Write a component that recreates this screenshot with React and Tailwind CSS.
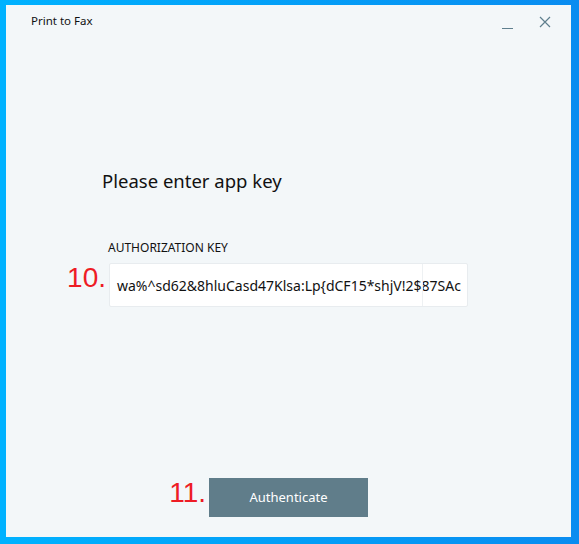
import React from 'react';

export default function App() {
  const font = { fontFamily: '"Noto Sans", "Open Sans", sans-serif' };
  return (
    <div className="w-[579px] h-[544px] bg-gradient-to-r from-[#00b2ff] to-[#0a8cf0] pl-[6px] pt-[5px]" style={font}>
      <div className="w-[565px] h-[532px] bg-[#f3f7f9] flex flex-col">
        {/* title bar */}
        <div className="h-[40px] flex items-start justify-between">
          <span className="text-[11.5px] text-[#111] pl-[25px] pt-[7px]">Print to Fax</span>
          <div className="flex items-start pr-[20px]">
            <div className="w-[11px] h-[1px] bg-[#5f7f8e] mt-[23px] mr-[26px]" />
            <svg width="12" height="12" viewBox="0 0 12 12" className="mt-[11px]">
              <path d="M1 1 L11 11 M11 1 L1 11" stroke="#5f7f8e" strokeWidth="1.2" />
            </svg>
          </div>
        </div>

        {/* heading */}
        <h1 className="pl-[96px] mt-[122px] text-[18.5px] leading-[28px] text-[#111]">Please enter app key</h1>

        {/* auth key */}
        <div className="pl-[102px] mt-[45px] text-[12px] leading-[16px] text-[#111]">AUTHORIZATION KEY</div>
        <div className="flex items-start mt-[7px]">
          <span className="w-[103px] pr-[3px] text-right text-[28px] leading-[30px] text-[#ee1c25]" style={{ fontFamily: '"Liberation Sans", sans-serif' }}>10.</span>
          <div className="w-[359px] h-[44px] bg-white rounded-[2px] border border-[#e8ecef] flex items-center relative">
            <span className="pl-[7px] text-[14px] text-[#111] whitespace-nowrap overflow-hidden">wa%^sd62&amp;8hluCasd47Klsa:Lp{'{'}dCF15*shjV!2$87SAc</span>
            <div className="absolute right-[44px] top-0 h-full w-[1px] bg-[#eef1f3]" />
          </div>
        </div>

        {/* button */}
        <div className="flex items-start mt-[171px]">
          <span className="w-[203px] pr-[3px] text-right text-[28px] leading-[30px] text-[#ee1c25]" style={{ fontFamily: '"Liberation Sans", sans-serif' }}>11.</span>
          <button className="w-[159px] h-[39px] bg-[#607d8a] text-white text-[13px]">Authenticate</button>
        </div>
      </div>
    </div>
  );
}
